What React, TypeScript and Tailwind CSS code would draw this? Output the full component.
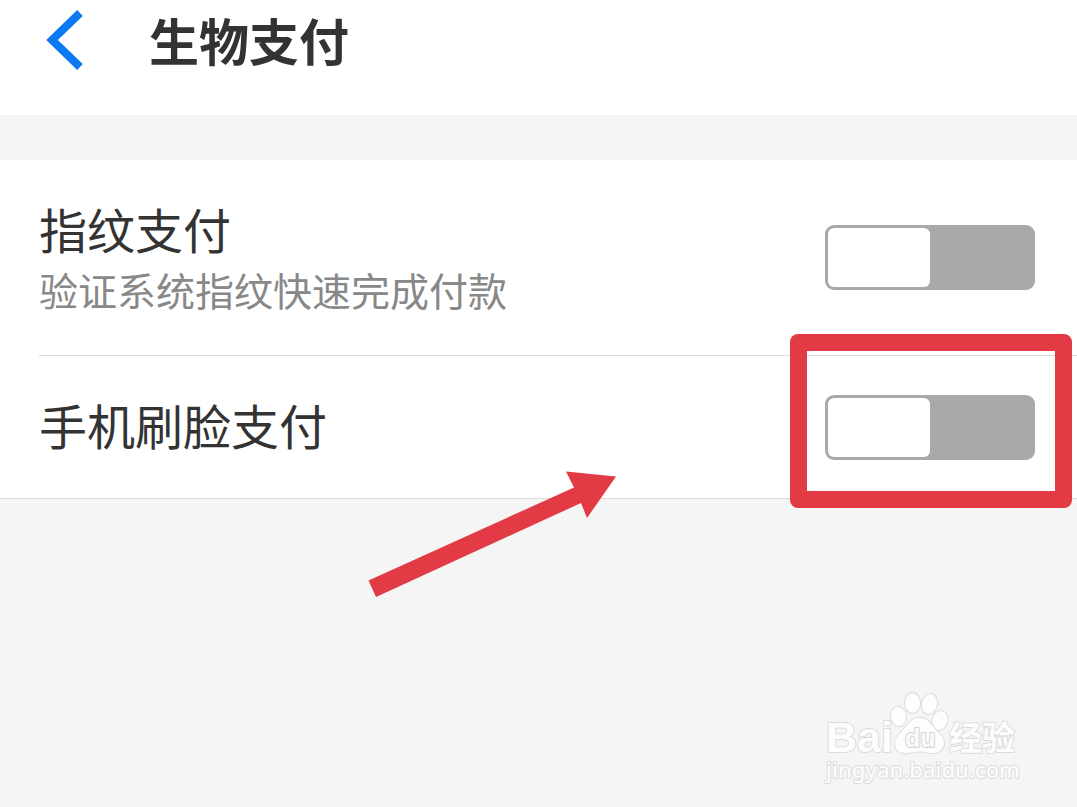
import { useState } from "react";

const FONT =
  "font-['Noto_Sans_CJK_SC','Liberation_Sans',sans-serif] antialiased";

function Toggle({ id }: { id: string }) {
  const [on, setOn] = useState(false);
  return (
    <input
      id={id}
      type="checkbox"
      role="switch"
      checked={on}
      onChange={() => setOn(!on)}
      className="flex h-[65px] w-[210px] shrink-0 cursor-pointer appearance-none rounded-[9px] bg-[#a8aaa7] p-[3px] before:block before:h-full before:w-1/2 before:rounded-md before:bg-white before:content-[''] checked:justify-end checked:bg-[#0a78f0]"
    />
  );
}

function Arrow() {
  return (
    <svg
      aria-hidden="true"
      viewBox="0 0 248 126"
      className="pointer-events-none absolute right-[461px] top-[115px] h-[126px] w-[248px]"
    >
      <path
        d="M0.5 109.500L206 16.500L198 0.500L248 5.500L219 47L213 32L8 126Z"
        fill="#e23b45"
      />
    </svg>
  );
}

function Watermark() {
  return (
    <svg
      role="img"
      aria-label="Baidu 经验"
      viewBox="0 0 200 96"
      className="h-[96px] w-[200px]"
      fill="#fdfdfd"
      stroke="#dcdcdc"
      strokeWidth="2"
      strokeLinejoin="round"
      paintOrder="stroke"
    >
      <text x="3" y="61" fontFamily="Liberation Sans" fontWeight="700" fontSize="43">
        Bai
      </text>
      <ellipse cx="75.500" cy="25.500" rx="7.500" ry="9.500" transform="rotate(-8 75.500 25.500)" />
      <ellipse cx="89.500" cy="12" rx="7.500" ry="10" />
      <ellipse cx="106.500" cy="13" rx="7.500" ry="10" transform="rotate(14 106.500 13)" />
      <ellipse cx="117" cy="29.500" rx="7.500" ry="9.500" transform="rotate(14 117 29.500)" />
      <path d="M96 27C88 27 85 33 81 38C77 43 72 46 72 53C72 60 78 63 86 62C94 60 100 60 107 62C115 63 121 59 121 52C121 45 115 42 111 37C107 31 104 27 96 27Z" />
      <text
        x="82"
        y="56"
        fontFamily="Liberation Sans"
        fontWeight="700"
        fontSize="25"
        fill="#fafafa"
        stroke="#d2d2d2"
        strokeWidth="2"
      >
        du
      </text>
      <text x="126" y="59" fontFamily="Noto Sans CJK SC" fontWeight="700" fontSize="33">
        经验
      </text>
      <text x="3" y="87" fontFamily="Noto Sans" fontWeight="500" fontSize="22">
        jingyan.baidu.com
      </text>
    </svg>
  );
}

export default function App() {
  return (
    <div className={`flex min-h-screen flex-col bg-[#f5f5f5] text-[#333333] ${FONT}`}>
      <header className="flex h-[115px] items-start bg-white pl-[46px]">
        <button type="button" aria-label="返回" className="mt-[9px] cursor-pointer">
          <svg viewBox="0 0 40 62" className="h-[62px] w-[40px]" aria-hidden="true">
            <path
              d="M34 4L6 31L34 58"
              fill="none"
              stroke="#0c79f2"
              strokeWidth="8"
            />
          </svg>
        </button>
        <h1 className="ml-[63px] text-[50px] font-bold leading-[78px]">生物支付</h1>
      </header>

      <main className="mt-[45px] border-b border-[#dcdcdc] bg-white">
        <div className="ml-[39px] flex h-[196px] items-center justify-between border-b border-[#dcdcdc] pr-[42px]">
          <div className="flex flex-col pb-[2px]">
            <label htmlFor="fingerprint" className="text-[48px] leading-[64px]">
              指纹支付
            </label>
            <p className="text-[39px] leading-[58px] text-[#888888]">
              验证系统指纹快速完成付款
            </p>
          </div>
          <Toggle id="fingerprint" />
        </div>
        <div className="relative ml-[39px] flex h-[142px] items-center justify-between pr-[42px]">
          <label htmlFor="face" className="pb-[6px] text-[48px] leading-[64px]">
            手机刷脸支付
          </label>
          <Toggle id="face" />
          <div className="pointer-events-none absolute -top-[22px] right-[5px] h-[174px] w-[282px] rounded-lg border-[17px] border-[#e23b45]" />
          <Arrow />
        </div>
      </main>

      <footer className="mt-auto flex justify-end pb-[20px] pr-[54px]">
        <Watermark />
      </footer>
    </div>
  );
}
